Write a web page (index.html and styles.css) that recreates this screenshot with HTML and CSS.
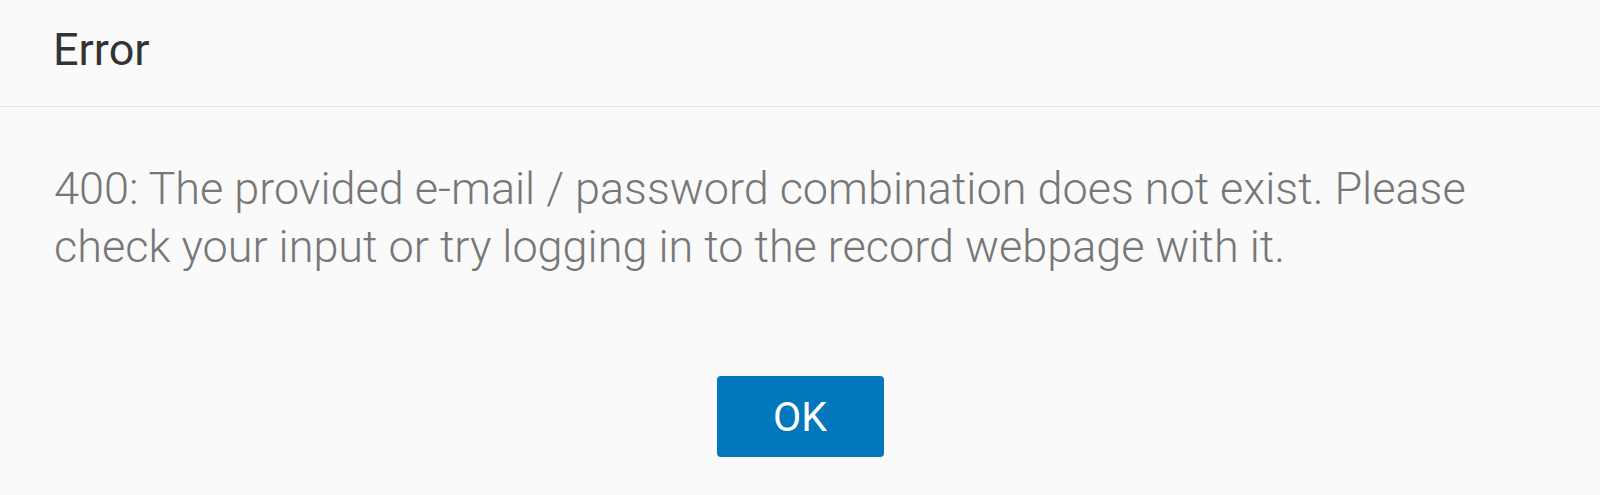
FILE: index.html
```html
<!DOCTYPE html>
<html lang="en">
<head>
    <meta charset="UTF-8">
    <meta name="viewport" content="width=device-width, initial-scale=1.0">
    <title>Error</title>
    <link rel="stylesheet" href="styles.css">
</head>
<body>
    <div class="dialog">
        <div class="dialog-head">
            <h2>Error</h2>
        </div>
        <div class="dialog-body">
            <p class="message">400: The provided e-mail / password combination does not exist. Please check your input or try logging in to the record webpage with it.</p>
            <div class="actions">
                <button id="ok-btn">OK</button>
            </div>
        </div>
    </div>
</body>
</html>
```

FILE: styles.css
```css
*{
    margin: 0px;
    padding: 0px;
    box-sizing: border-box;
    font-family: Roboto, 'Noto Sans', sans-serif;
}
body{
    background-color: #fafafa;
}
.dialog{
    width: 1600px;
    height: 495px;
    background-color: #fafafa;
}
.dialog-head{
    padding: 21px 54px 27px 53px;
    border-bottom: 1px solid #e6e6e6;
}
.dialog-head h2{
    font-size: 45px;
    line-height: 58px;
    font-weight: 400;
    color: #333333;
}
.dialog-body{
    padding: 53px 54px 0px 54px;
}
.message{
    font-size: 45px;
    line-height: 58px;
    font-weight: 300;
    color: #777777;
}
.actions{
    display: flex;
    justify-content: center;
    margin-top: 100px;
}
#ok-btn{
    width: 167px;
    height: 81px;
    border: none;
    border-radius: 4px;
    background-color: #0277bd;
    color: white;
    font-size: 41px;
    font-weight: 400;
}
```
